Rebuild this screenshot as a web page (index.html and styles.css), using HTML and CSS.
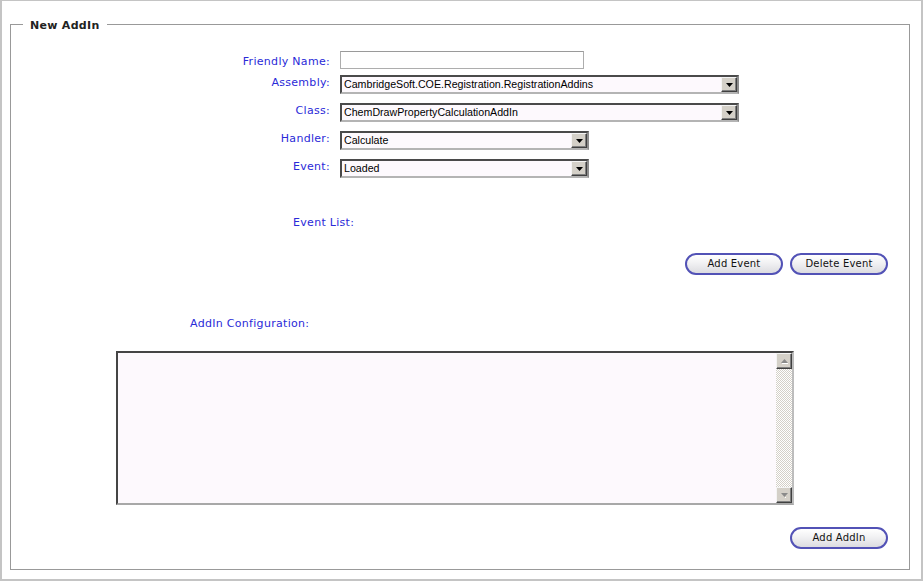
FILE: index.html
```html
<!DOCTYPE html>
<html>
<head>
<meta charset="utf-8">
<title>New AddIn</title>
<link rel="stylesheet" href="styles.css">
</head>
<body>
<div class="page">
  <fieldset class="panel">
    <legend class="panel-title">New AddIn</legend>

    <div class="form">
      <label class="lbl lbl-first">Friendly Name:</label>
      <div class="ctl"><div class="textbox"></div></div>

      <label class="lbl">Assembly:</label>
      <div class="ctl">
        <div class="select select-wide">
          <span class="select-text">CambridgeSoft.COE.Registration.RegistrationAddins</span>
          <span class="drop"><svg width="7" height="4" viewBox="0 0 7 4"><polygon points="0,0 7,0 3.5,4" fill="#000"/></svg></span>
        </div>
      </div>

      <label class="lbl">Class:</label>
      <div class="ctl">
        <div class="select select-wide">
          <span class="select-text">ChemDrawPropertyCalculationAddIn</span>
          <span class="drop"><svg width="7" height="4" viewBox="0 0 7 4"><polygon points="0,0 7,0 3.5,4" fill="#000"/></svg></span>
        </div>
      </div>

      <label class="lbl">Handler:</label>
      <div class="ctl">
        <div class="select select-narrow">
          <span class="select-text">Calculate</span>
          <span class="drop"><svg width="7" height="4" viewBox="0 0 7 4"><polygon points="0,0 7,0 3.5,4" fill="#000"/></svg></span>
        </div>
      </div>

      <label class="lbl">Event:</label>
      <div class="ctl">
        <div class="select select-narrow">
          <span class="select-text">Loaded</span>
          <span class="drop"><svg width="7" height="4" viewBox="0 0 7 4"><polygon points="0,0 7,0 3.5,4" fill="#000"/></svg></span>
        </div>
      </div>
    </div>

    <div class="event-list lbl">Event List:</div>

    <div class="btn-row btn-row-events">
      <button class="pill">Add Event</button>
      <button class="pill">Delete Event</button>
    </div>

    <div class="config-label lbl">AddIn Configuration:</div>

    <div class="textarea">
      <div class="ta-body"></div>
      <div class="scrollbar">
        <span class="sb-btn"><svg width="7" height="5" viewBox="0 0 7 5"><polygon points="0,4 7,4 3.5,0" fill="#8a8a8a"/><line x1="1" y1="4.5" x2="7" y2="4.5" stroke="#ffffff" stroke-width="1"/></svg></span>
        <span class="sb-track"></span>
        <span class="sb-btn"><svg width="7" height="5" viewBox="0 0 7 5"><polygon points="0,0 7,0 3.5,4" fill="#8a8a8a"/><line x1="4" y1="4.5" x2="5" y2="4.5" stroke="#ffffff" stroke-width="1"/></svg></span>
      </div>
    </div>

    <div class="btn-row btn-row-add">
      <button class="pill">Add AddIn</button>
    </div>
  </fieldset>
</div>
</body>
</html>
```

FILE: styles.css
```css
html, body {
  margin: 0;
  padding: 0;
  background: #ffffff;
}

.page {
  width: 923px;
  height: 581px;
  box-sizing: border-box;
  border-style: solid;
  border-color: #c4c4c4;
  border-width: 1px 2px 2px 2px;
  padding: 14px 0 0 8px;
  font-family: "DejaVu Sans", Verdana, sans-serif;
  font-size: 11px;
}

.panel {
  width: 898px;
  margin: 0;
  padding: 18px 0 20px 0;
  border: 1px solid #999999;
  min-width: 0;
}

.panel-title {
  margin-left: 12px;
  padding: 4px 7px 0 7px;
  font-weight: bold;
  font-size: 11px;
  line-height: 14px;
  letter-spacing: 0.3px;
  color: #222222;
}

.lbl {
  color: #2a2ad8;
  font-size: 11px;
  line-height: 14px;
  letter-spacing: 0.3px;
}

.form {
  display: grid;
  grid-template-columns: 319px auto;
  grid-template-rows: 24px repeat(4, 28px);
  column-gap: 10px;
  align-items: start;
}

.form .lbl {
  text-align: right;
  padding-top: 1px;
}

.form .lbl-first {
  padding-top: 4px;
}

.ctl {
  display: flex;
}

.textbox {
  width: 244px;
  height: 18px;
  box-sizing: border-box;
  border: 1px solid #adadad;
  border-top-color: #9a9a9a;
  background: #ffffff;
}

.select {
  display: flex;
  align-items: center;
  height: 19px;
  box-sizing: border-box;
  border: 2px solid;
  border-color: #4a4a4a #8c8c8c #b4b4b4 #4a4a4a;
  background: #fdf9fd;
  font-family: "Liberation Sans", Arial, sans-serif;
  font-size: 10.65px;
  color: #000000;
}

.select-wide {
  width: 399px;
}

.select-narrow {
  width: 249px;
}

.select-text {
  flex: 1;
  padding-left: 2px;
  line-height: 15px;
  white-space: nowrap;
  overflow: hidden;
}

.drop,
.sb-btn {
  display: flex;
  align-items: center;
  justify-content: center;
  width: 16px;
  height: 15px;
  box-sizing: border-box;
  background: #d4d0c8;
  border: 1px solid;
  border-color: #f4f4f4 #404040 #404040 #f4f4f4;
  box-shadow: inset -1px -1px 0 #808080;
}

.event-list {
  margin-top: 29px;
  padding-left: 282px;
}

.btn-row {
  display: flex;
  justify-content: flex-end;
  gap: 7px;
  padding-right: 21px;
}

.btn-row-events {
  margin-top: 23px;
}

.btn-row-add {
  margin-top: 22px;
}

.pill {
  width: 98px;
  height: 22px;
  box-sizing: border-box;
  margin: 0;
  padding: 0;
  border: 2px solid #5252b6;
  border-radius: 11px;
  background: linear-gradient(#ffffff 0%, #f1f1f3 45%, #dcdce0 100%);
  font-family: "DejaVu Sans", Verdana, sans-serif;
  font-size: 10px;
  letter-spacing: 0.2px;
  color: #111111;
  line-height: 16px;
}

.config-label {
  margin-top: 42px;
  padding-left: 179px;
}

.textarea {
  display: flex;
  width: 678px;
  height: 154px;
  box-sizing: border-box;
  margin: 20px 0 0 105px;
  border: 2px solid;
  border-color: #454545 #bdbdbd #a8a8a8 #454545;
  background: #fdf9fd;
}

.ta-body {
  flex: 1;
}

.scrollbar {
  display: flex;
  flex-direction: column;
  width: 16px;
}

.scrollbar .sb-btn {
  height: 16px;
}

.sb-track {
  flex: 1;
  background: repeating-conic-gradient(#d4d0c8 0 25%, #ffffff 0 50%) 0 0 / 2px 2px;
}
```
